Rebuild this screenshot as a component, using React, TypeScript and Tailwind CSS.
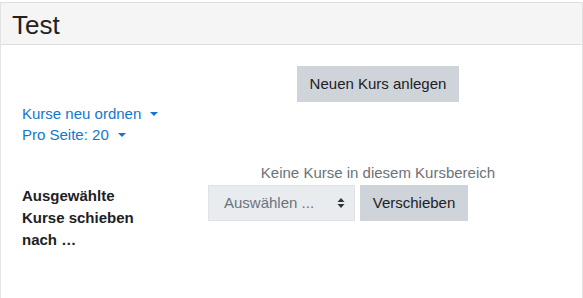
const Caret = () => (
  <span className="ml-[9px] inline-block h-0 w-0 border-x-[4px] border-t-[4px] border-x-transparent border-t-[#1177d1] align-middle" />
)

const App = () => {
  return (
    <div className="h-[298px] w-[583px] bg-white pt-[2px] font-['Liberation_Sans',Arial,sans-serif] text-[15px] text-[#1d2125]">
      <div className="flex h-full flex-col border-x border-[#e3e3e3]">
        <div className="flex h-[43px] items-center border-y border-[#dedede] bg-[#f5f5f5] pl-[11px]">
          <h1 className="pt-[2px] text-[26px] leading-none text-[#222]">Test</h1>
        </div>

        <div className="pl-[21px] pt-[21px]">
          <div className="grid grid-cols-[186px_340px]">
            <div />
            <div className="flex justify-center">
              <button className="h-[36px] w-[162px] bg-[#ced4da] text-[15px] text-[#1d2125]">
                Neuen Kurs anlegen
              </button>
            </div>
          </div>

          <div className="flex flex-col pt-[1px] leading-[21px] text-[#1177d1]">
            <a className="flex items-center">
              Kurse neu ordnen
              <Caret />
            </a>
            <a className="flex items-center">
              Pro Seite: 20
              <Caret />
            </a>
          </div>

          <div className="grid grid-cols-[186px_340px]">
            <div />
            <p className="mt-[17px] text-center leading-[22px] text-[#6a737b]">Keine Kurse in diesem Kursbereich</p>
          </div>

          <div className="mt-[1px] grid grid-cols-[186px_auto]">
            <p className="font-bold leading-[22px]">
              Ausgewählte
              <br />
              Kurse schieben
              <br />
              nach …
            </p>
            <div className="flex h-[36px] gap-[5px]">
              <div className="flex h-[36px] w-[147px] items-center justify-between border border-[#dee2e6] bg-[#e9ecef] pl-[15px] pr-[9px] text-[#6a737b]">
                <span>Auswählen ...</span>
                <svg width="8" height="12" viewBox="0 0 8 12">
                  <path d="M4 1 L7.5 5 H0.5 Z M4 11 L0.5 7 H7.5 Z" fill="#333" />
                </svg>
              </div>
              <button className="h-[36px] w-[108px] bg-[#ced4da] text-[15px] text-[#1d2125]">Verschieben</button>
            </div>
          </div>
        </div>
      </div>
    </div>
  )
}

export default App
